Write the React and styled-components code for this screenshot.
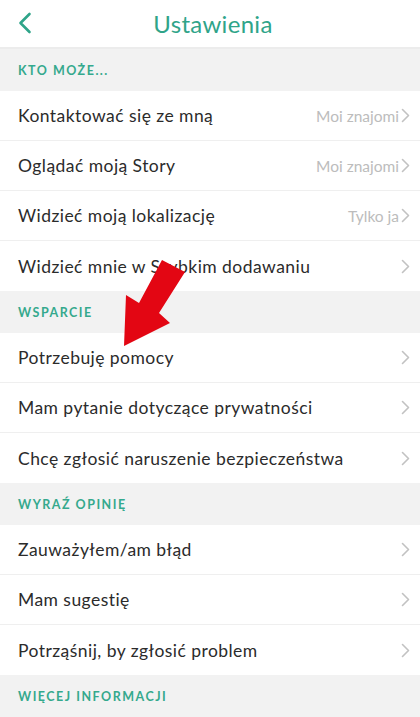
import styled, { createGlobalStyle } from "styled-components";

const GlobalStyle = createGlobalStyle`
    html, body {
        margin: 0;
        padding: 0;
        background: #ffffff;
    }
    body {
        font-family: 'Lato', 'Noto Sans', sans-serif;
        overflow: hidden;
    }
`

const sections = [
    {
        title: "KTO MOŻE...",
        rows: [
            { label: "Kontaktować się ze mną", value: "Moi znajomi" },
            { label: "Oglądać moją Story", value: "Moi znajomi" },
            { label: "Widzieć moją lokalizację", value: "Tylko ja" },
            { label: "Widzieć mnie w Szybkim dodawaniu" },
        ],
    },
    {
        title: "WSPARCIE",
        rows: [
            { label: "Potrzebuję pomocy" },
            { label: "Mam pytanie dotyczące prywatności" },
            { label: "Chcę zgłosić naruszenie bezpieczeństwa" },
        ],
    },
    {
        title: "WYRAŹ OPINIĘ",
        rows: [
            { label: "Zauważyłem/am błąd" },
            { label: "Mam sugestię" },
            { label: "Potrząśnij, by zgłosić problem" },
        ],
    },
    {
        title: "WIĘCEJ INFORMACJI",
        rows: [],
    },
];

function Chevron({ color, size }) {
    return (
        <svg width={size * 0.6} height={size} viewBox="0 0 9 15" fill="none">
            <path d="M1.5 1.5 L7.5 7.5 L1.5 13.5" stroke={color} strokeWidth="1.6" strokeLinecap="round" strokeLinejoin="round" />
        </svg>
    );
}

export default function App() {
    return (
        <Pagina>
            <GlobalStyle />
            <Topo>
                <Voltar>
                    <svg width="16" height="22" viewBox="0 0 16 22" fill="none">
                        <path d="M12.5 2 L3.5 11 L12.5 20" stroke="#2fa489" strokeWidth="2.6" strokeLinecap="round" strokeLinejoin="round" />
                    </svg>
                </Voltar>
                <Titulo>Ustawienia</Titulo>
            </Topo>
            {sections.map((s) => (
                <Secao key={s.title}>
                    <Cabecalho>{s.title}</Cabecalho>
                    {s.rows.map((r) => (
                        <Linha key={r.label}>
                            <Rotulo>{r.label}</Rotulo>
                            <Direita>
                                {r.value && <Valor>{r.value}</Valor>}
                                <Chevron color="#c2c2c2" size={15} />
                            </Direita>
                        </Linha>
                    ))}
                </Secao>
            ))}
            <Seta width="420" height="717" viewBox="0 0 420 717">
                <polygon
                    points="162,260 185,272 159,313 170,323 124,346 126,295 139,303"
                    fill="#e30613"
                />
            </Seta>
        </Pagina>
    );
}

const Pagina = styled.main`
    position: relative;
    width: 420px;
    height: 717px;
    overflow: hidden;
    background: #ffffff;
`
const Topo = styled.header`
    height: 47px;
    display: flex;
    align-items: center;
    justify-content: center;
    position: relative;
    border-bottom: 2px solid #ececec;
`
const Voltar = styled.div`
    position: absolute;
    left: 17px;
    top: 12px;
    display: flex;
`
const Titulo = styled.h1`
    margin: 0 0 0 6px;
    font-family: 'Lato', 'Noto Sans', sans-serif;
    font-weight: 400;
    font-size: 24px;
    color: #2fa489;
    letter-spacing: 0.3px;
`
const Secao = styled.section`
    display: flex;
    flex-direction: column;
`
const Cabecalho = styled.div`
    height: 42px;
    display: flex;
    align-items: center;
    padding-left: 18px;
    background: #f2f2f2;
    color: #35a98d;
    font-size: 12.5px;
    font-weight: 700;
    letter-spacing: 1.5px;
`
const Linha = styled.div`
    height: 50px;
    display: flex;
    align-items: center;
    justify-content: space-between;
    padding: 0 10px 0 18px;
    box-sizing: border-box;
    border-bottom: 1px solid #efefef;

    &:last-child {
        border-bottom: none;
    }
`
const Rotulo = styled.span`
    font-size: 17.5px;
    color: #2b2b2b;
    letter-spacing: 0.45px;
`
const Direita = styled.div`
    display: flex;
    align-items: center;
    gap: 2px;
`
const Valor = styled.span`
    font-size: 15.5px;
    color: #bcbcbc;
`
const Seta = styled.svg`
    position: absolute;
    left: 0;
    top: 0;
    pointer-events: none;
`
